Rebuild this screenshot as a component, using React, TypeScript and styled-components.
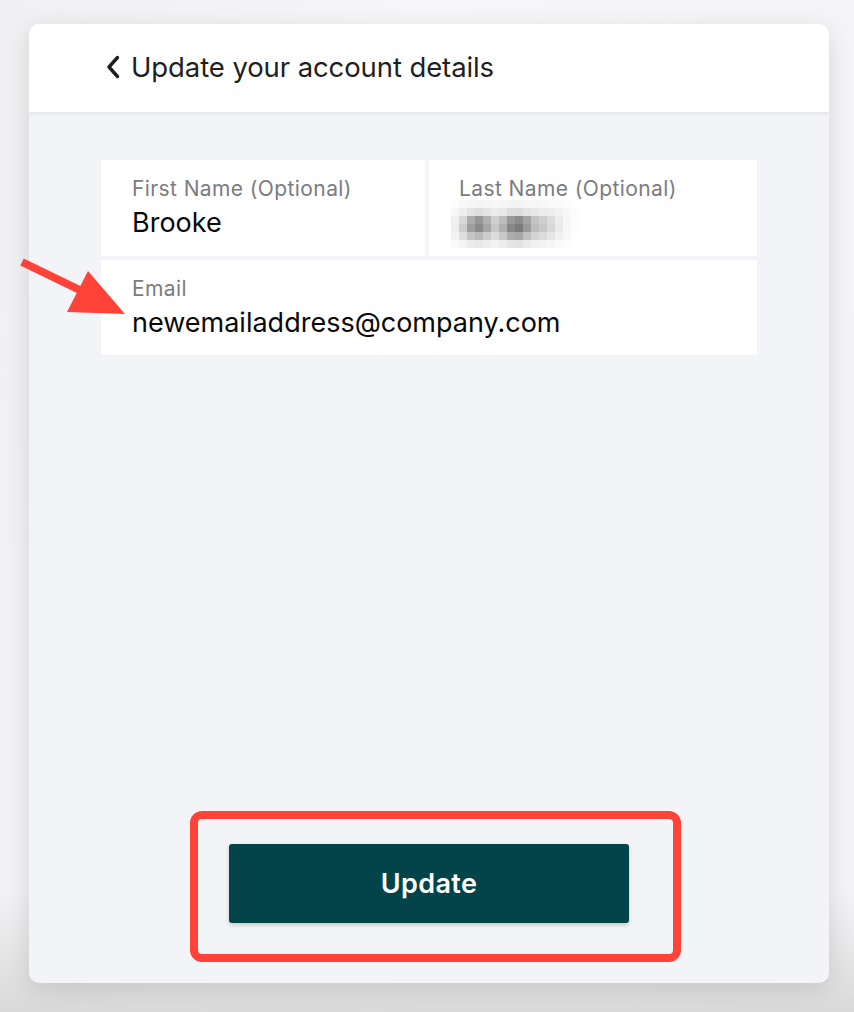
import React from 'react';
import styled, { createGlobalStyle } from 'styled-components';

const GlobalStyle = createGlobalStyle`
  * { box-sizing: border-box; }
  html, body {
    margin: 0;
    padding: 0;
  }
  body {
    width: 854px;
    height: 1012px;
    overflow: hidden;
    font-family: Inter, "Liberation Sans", sans-serif;
    background:
      linear-gradient(180deg, rgba(255,255,255,0) 0%, rgba(255,255,255,0) 88%, rgba(200,200,200,0.6) 100%),
      linear-gradient(100deg, #f0f0f2 0%, #f6f6f8 40%, #f4f4f6 100%);
  }
`;

const Page = styled.div`
  position: relative;
  width: 854px;
  height: 1012px;
  padding: 24px 25px 29px 29px;
`;

const Card = styled.div`
  display: flex;
  flex-direction: column;
  width: 800px;
  height: 959px;
  border-radius: 10px;
  overflow: hidden;
  background: #f3f4f8;
  box-shadow: 0 6px 24px rgba(0, 0, 0, 0.12);
`;

const Header = styled.header`
  display: flex;
  align-items: center;
  gap: 10px;
  height: 88px;
  padding-left: 76px;
  padding-bottom: 2px;
  background: #ffffff;
  box-shadow: 0 2px 4px rgba(0, 0, 0, 0.07);
  position: relative;
  z-index: 1;
`;

const Title = styled.h1`
  margin: 0;
  font-size: 27.5px;
  font-weight: 400;
  color: #1f1f23;
  letter-spacing: -0.1px;
`;

const Body = styled.div`
  flex: 1;
  display: flex;
  flex-direction: column;
  padding: 48px 72px 60px;
`;

const Fields = styled.div`
  display: grid;
  grid-template-columns: 324px 328px;
  grid-template-rows: 96px 95px;
  gap: 4px;
`;

const Field = styled.div<{ $wide?: boolean; $inset?: number }>`
  grid-column: ${(p) => (p.$wide ? '1 / span 2' : 'auto')};
  background: #ffffff;
  padding: 16px 0 0 ${(p) => p.$inset ?? 31}px;
  display: flex;
  flex-direction: column;
`;

const Label = styled.span`
  font-size: 21px;
  color: #7c7c80;
  line-height: 26px;
  letter-spacing: 0.4px;
`;

const Value = styled.span`
  font-size: 27px;
  color: #0a0a0a;
  line-height: 32px;
  margin-top: 5px;
`;

const Pixelated = styled.div`
  display: grid;
  grid-template-columns: repeat(16, 8px);
  grid-auto-rows: 8px;
  margin: -2px 0 0 -8px;
`;

const Px = styled.span<{ $v: number }>`
  background: ${(p) => `rgb(${p.$v}, ${p.$v}, ${p.$v})`};
`;

const Spacer = styled.div`
  flex: 1;
`;

const ButtonRow = styled.div`
  display: flex;
  justify-content: center;
`;

const UpdateButton = styled.button`
  width: 400px;
  height: 79px;
  border: none;
  border-radius: 3px;
  background: #03444a;
  color: #ffffff;
  font-family: Inter, "Liberation Sans", sans-serif;
  font-size: 27px;
  font-weight: 600;
  letter-spacing: 0.4px;
  box-shadow: 0 2px 4px rgba(0, 0, 0, 0.18);
  cursor: pointer;
`;

const Highlight = styled.div`
  position: absolute;
  left: 190px;
  top: 811px;
  width: 491px;
  height: 151px;
  border: 8px solid #ff4338;
  border-radius: 12px;
  pointer-events: none;
`;

const ArrowSvg = styled.svg`
  position: absolute;
  left: 0;
  top: 240px;
  pointer-events: none;
`;

const blur = [
  [252, 248, 246, 244, 246, 248, 246, 244, 244, 246, 246, 248, 250, 250, 252, 254],
  [246, 238, 228, 222, 228, 236, 232, 222, 220, 228, 232, 236, 238, 242, 248, 252],
  [240, 216, 172, 150, 178, 208, 188, 152, 140, 164, 196, 206, 220, 236, 246, 252],
  [238, 206, 158, 138, 166, 200, 176, 136, 124, 154, 190, 200, 216, 234, 246, 252],
  [242, 222, 196, 186, 204, 220, 200, 172, 166, 192, 212, 220, 230, 240, 248, 254],
  [250, 244, 236, 232, 236, 242, 236, 228, 226, 234, 240, 242, 246, 250, 252, 255],
];

const Chevron = () => (
  <svg width="16" height="24" viewBox="0 0 16 24">
    <path d="M12.5 2.5 L4 12 L12.5 21.5" fill="none" stroke="#1f1f23" strokeWidth="3.4" strokeLinecap="round" strokeLinejoin="round" />
  </svg>
);

export default function App() {
  return (
    <>
      <GlobalStyle />
      <Page>
        <Card>
          <Header>
            <Chevron />
            <Title>Update your account details</Title>
          </Header>
          <Body>
            <Fields>
              <Field>
                <Label>First Name (Optional)</Label>
                <Value>Brooke</Value>
              </Field>
              <Field $inset={30}>
                <Label>Last Name (Optional)</Label>
                <Pixelated>
                  {blur.flat().map((v, i) => (
                    <Px key={i} $v={v} />
                  ))}
                </Pixelated>
              </Field>
              <Field $wide>
                <Label>Email</Label>
                <Value>newemailaddress@company.com</Value>
              </Field>
            </Fields>
            <Spacer />
            <ButtonRow>
              <UpdateButton>Update</UpdateButton>
            </ButtonRow>
          </Body>
        </Card>
        <Highlight />
        <ArrowSvg width="140" height="90" viewBox="0 0 140 90">
          <line x1="22" y1="22" x2="90" y2="55" stroke="#ff4338" strokeWidth="8" strokeLinecap="butt" />
          <polygon points="88,31 67,72 125,74" fill="#ff4338" />
        </ArrowSvg>
      </Page>
    </>
  );
}
